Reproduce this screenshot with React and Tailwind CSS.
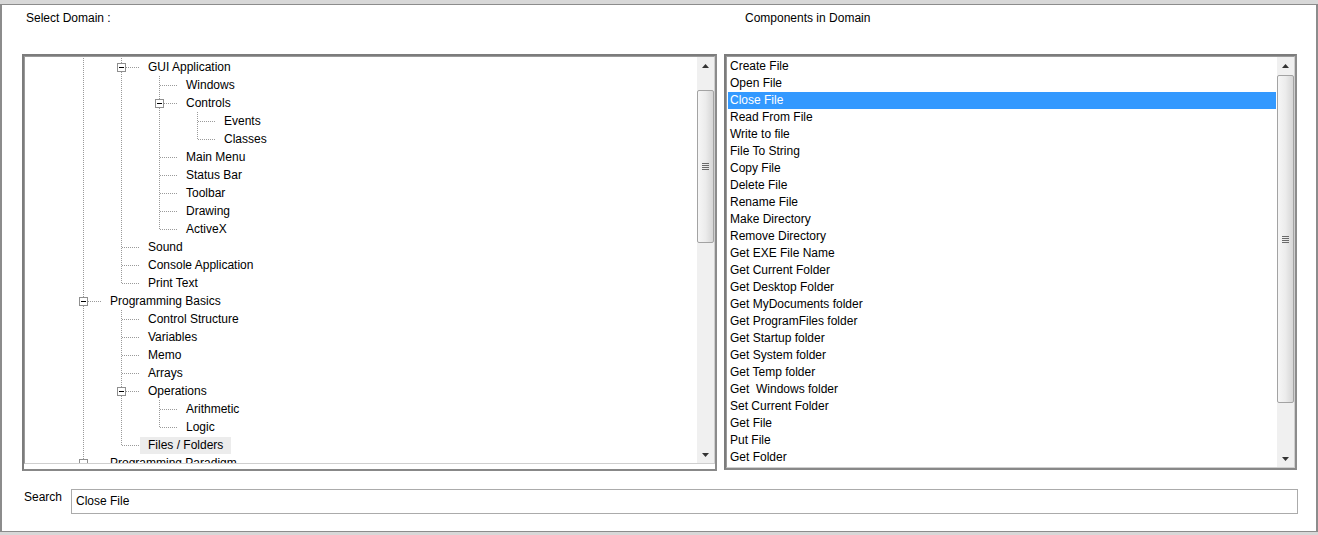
import React from "react";

const treeRows = [
  { label: "GUI Application", guides: ["none", "pass", "tee"], expander: true },
  { label: "Windows", guides: ["none", "pass", "pass", "tee"] },
  { label: "Controls", guides: ["none", "pass", "pass", "tee"], expander: true },
  { label: "Events", guides: ["none", "pass", "pass", "pass", "tee"] },
  { label: "Classes", guides: ["none", "pass", "pass", "pass", "end"] },
  { label: "Main Menu", guides: ["none", "pass", "pass", "tee"] },
  { label: "Status Bar", guides: ["none", "pass", "pass", "tee"] },
  { label: "Toolbar", guides: ["none", "pass", "pass", "tee"] },
  { label: "Drawing", guides: ["none", "pass", "pass", "tee"] },
  { label: "ActiveX", guides: ["none", "pass", "pass", "end"] },
  { label: "Sound", guides: ["none", "pass", "tee"] },
  { label: "Console Application", guides: ["none", "pass", "tee"] },
  { label: "Print Text", guides: ["none", "pass", "end"] },
  { label: "Programming Basics", guides: ["none", "tee"], expander: true },
  { label: "Control Structure", guides: ["none", "pass", "tee"] },
  { label: "Variables", guides: ["none", "pass", "tee"] },
  { label: "Memo", guides: ["none", "pass", "tee"] },
  { label: "Arrays", guides: ["none", "pass", "tee"] },
  { label: "Operations", guides: ["none", "pass", "tee"], expander: true },
  { label: "Arithmetic", guides: ["none", "pass", "pass", "tee"] },
  { label: "Logic", guides: ["none", "pass", "pass", "end"] },
  { label: "Files / Folders", guides: ["none", "pass", "end"], selected: true },
  { label: "Programming Paradigm", guides: ["none", "tee"], expander: true },
];

const components = [
  "Create File",
  "Open File",
  "Close File",
  "Read From File",
  "Write to file",
  "File To String",
  "Copy File",
  "Delete File",
  "Rename File",
  "Make Directory",
  "Remove Directory",
  "Get EXE File Name",
  "Get Current Folder",
  "Get Desktop Folder",
  "Get MyDocuments folder",
  "Get ProgramFiles folder",
  "Get Startup folder",
  "Get System folder",
  "Get Temp folder",
  "Get  Windows folder",
  "Set Current Folder",
  "Get File",
  "Put File",
  "Get Folder",
];

const dot = { stroke: "#9a9a9a", strokeWidth: 1, strokeDasharray: "1 1", shapeRendering: "crispEdges" };

function Guide({ kind, expander, isOwn }) {
  return (
    <svg width="38" height="18" className="block shrink-0">
      {(kind === "pass" || kind === "tee") && <line x1="19.5" y1="0" x2="19.5" y2="18" {...dot} />}
      {kind === "end" && <line x1="19.5" y1="0" x2="19.5" y2="10" {...dot} />}
      {(kind === "tee" || kind === "end") && <line x1="20" y1="9.5" x2="38" y2="9.5" {...dot} />}
      {isOwn && expander && (
        <g shapeRendering="crispEdges">
          <rect x="15.5" y="5.5" width="8" height="8" fill="#fff" stroke="#8f8f8f" />
          <line x1="17" y1="9.5" x2="22" y2="9.5" stroke="#000" />
        </g>
      )}
    </svg>
  );
}

function TreeRow({ row }) {
  const last = row.guides.length - 1;
  return (
    <div className="flex h-[18px] items-center">
      {row.guides.map((g, i) => (
        <Guide key={i} kind={g} expander={row.expander} isOwn={i === last} />
      ))}
      <span
        className={
          row.selected
            ? "h-[17px] px-2 leading-[17px] whitespace-nowrap bg-[#ececec]"
            : "h-[17px] px-2 leading-[17px] whitespace-nowrap"
        }
      >
        {row.label}
      </span>
    </div>
  );
}

function Arrow({ down }) {
  return (
    <div className="flex h-[17px] items-center justify-center">
      <svg width="7" height="4">
        {down ? <path d="M0 0 L7 0 L3.5 4 Z" fill="#333" /> : <path d="M3.5 0 L7 4 L0 4 Z" fill="#333" />}
      </svg>
    </div>
  );
}

function Thumb({ className }) {
  return (
    <div
      className={
        "flex items-center justify-center rounded-[2px] border border-[#a3a3a3] bg-gradient-to-r from-[#f6f6f6] via-[#ececec] to-[#d6d6d6] " +
        className
      }
    >
      <div className="flex flex-col gap-px">
        <div className="h-px w-[7px] bg-[#6a6a6a]" />
        <div className="h-px w-[7px] bg-[#6a6a6a]" />
        <div className="h-px w-[7px] bg-[#6a6a6a]" />
        <div className="h-px w-[7px] bg-[#6a6a6a]" />
      </div>
    </div>
  );
}

function ScrollBar({ offset, thumb }) {
  return (
    <div className="flex h-full w-[17px] shrink-0 flex-col bg-[#f0f0f0]">
      <Arrow />
      <div className="flex flex-1 flex-col">
        <div className={offset} />
        <Thumb className={thumb} />
      </div>
      <Arrow down />
    </div>
  );
}

export default function App() {
  return (
    <div className="flex h-[535px] w-[1318px] flex-col overflow-hidden bg-[#d8d8d8] font-['Liberation_Sans',Arial,sans-serif] text-[12px] text-black">
      <div className="h-[4px] shrink-0" />
      <div className="flex h-[528px] shrink-0 flex-col border-x-2 border-y border-[#8c8c8c] bg-white">
        {/* labels */}
        <div className="flex h-[49px] shrink-0 pt-[6px] leading-[14px]">
          <div className="ml-[20px] w-[695px] pl-[4px]">Select Domain :</div>
          <div className="ml-[7px] w-[573px] pl-[21px]">Components in Domain</div>
        </div>

        {/* panels */}
        <div className="flex h-[417px] shrink-0 items-start">
          {/* domain tree */}
          <div className="ml-[20px] h-[417px] w-[695px] border-2 border-t-[#7c7c7c] border-l-[#7c7c7c] border-b-[#888888] border-r-[#8c8c8c]">
            <div className="flex h-[408px] border border-t-[#9a9a9a] border-l-[#9a9a9a] border-b-[#cfcfcf] border-r-[#cfcfcf]">
              <div className="flex-1 overflow-hidden pl-px pt-px">
                {treeRows.map((r) => (
                  <TreeRow key={r.label} row={r} />
                ))}
              </div>
              <ScrollBar offset="h-[16px]" thumb="h-[153px]" />
            </div>
          </div>

          {/* components list */}
          <div className="ml-[7px] h-[416px] w-[573px] border-2 border-t-[#7c7c7c] border-l-[#7c7c7c] border-b-[#888888] border-r-[#8c8c8c]">
            <div className="flex h-full border border-t-[#9a9a9a] border-l-[#9a9a9a] border-b-[#cfcfcf] border-r-[#cfcfcf]">
              <div className="w-[549px] overflow-hidden pl-px pt-px">
                {components.map((c) => (
                  <div
                    key={c}
                    className={
                      c === "Close File"
                        ? "h-[17px] whitespace-pre px-[2px] leading-[17px] bg-[#3399ff] text-white"
                        : "h-[17px] whitespace-pre px-[2px] leading-[17px]"
                    }
                  >
                    {c}
                  </div>
                ))}
              </div>
              <div className="w-px" />
              <ScrollBar offset="h-px" thumb="h-[328px]" />
            </div>
          </div>
        </div>

        {/* search */}
        <div className="mt-[18px] flex items-start">
          <div className="ml-[22px] w-[47px] pt-px leading-[14px]">Search</div>
          <input
            readOnly
            value="Close File"
            className="h-[25px] w-[1227px] border border-[#ababab] pl-[4px] pb-px text-[12px] leading-[23px] outline-none"
          />
        </div>
      </div>
    </div>
  );
}
